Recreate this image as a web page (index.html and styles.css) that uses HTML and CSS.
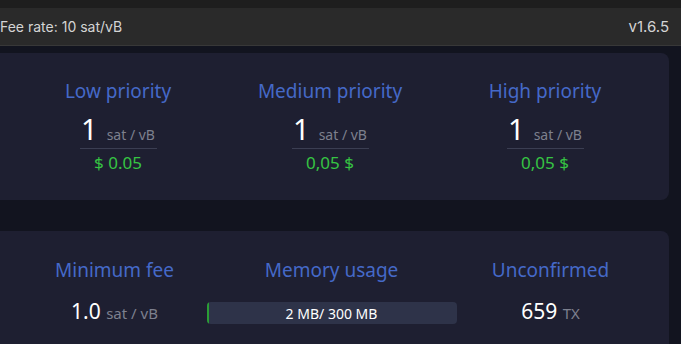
FILE: index.html
```html
<!DOCTYPE html>
<html lang="en">
<head>
    <meta charset="UTF-8">
    <title>Fees</title>
    <link rel="stylesheet" href="styles.css">
</head>
<body>
    <div class="top-strip"></div>
    <div class="top-bar">
        <span>Fee rate: 10 sat/vB</span>
        <span class="version">v1.6.5</span>
    </div>

    <div class="card fees">
        <div class="col">
            <h2>Low priority</h2>
            <div class="rate"><span class="num">1</span><span class="unit">sat / vB</span></div>
            <div class="fiat">$ 0.05</div>
        </div>
        <div class="col">
            <h2>Medium priority</h2>
            <div class="rate"><span class="num">1</span><span class="unit">sat / vB</span></div>
            <div class="fiat">0,05 $</div>
        </div>
        <div class="col">
            <h2>High priority</h2>
            <div class="rate"><span class="num">1</span><span class="unit">sat / vB</span></div>
            <div class="fiat">0,05 $</div>
        </div>
    </div>

    <div class="card stats">
        <div class="col">
            <h2>Minimum fee</h2>
            <div class="value">1.0 <span class="unit">sat / vB</span></div>
        </div>
        <div class="col">
            <h2>Memory usage</h2>
            <div class="progress">
                <div class="progress-fill" style="width: 0.7%"></div>
                <span class="progress-label">2 MB/ 300 MB</span>
            </div>
        </div>
        <div class="col">
            <h2>Unconfirmed</h2>
            <div class="value">659 <span class="unit">TX</span></div>
        </div>
    </div>
</body>
</html>
```

FILE: styles.css
```css
body {
    margin: 0;
    background: #12141f;
    font-family: 'Noto Sans', 'Open Sans', sans-serif;
    overflow: hidden;
    height: 344px;
}

.top-strip {
    height: 8px;
    background: #1e1e1e;
}

.top-bar {
    height: 37px;
    background: #2a2a2a;
    border-bottom: 1px solid #383838;
    display: flex;
    justify-content: space-between;
    align-items: center;
    padding: 0 12px 0 0;
    font-family: 'Inter', 'Noto Sans', sans-serif;
    font-size: 14px;
    color: #d4d4d4;
}

.version {
    font-size: 15px;
}

.card {
    background: #1e1f31;
    border-radius: 8px;
    margin-left: -9px;
    width: 678px;
    box-sizing: border-box;
    display: grid;
}

.fees {
    margin-top: 7px;
    height: 147px;
    padding: 25px 0 0 21px;
    grid-template-columns: 212px 212px 218px;
}

.stats {
    margin-top: 31px;
    height: 130px;
    padding: 26px 0 0 15px;
    grid-template-columns: 217px 217px 221px;
}

.col {
    display: flex;
    flex-direction: column;
    align-items: center;
}

h2 {
    margin: 0;
    font-size: 19px;
    font-weight: 400;
    color: #4569c8;
    line-height: 26px;
}

.rate {
    margin-top: 9px;
    width: 77px;
    padding-bottom: 3px;
    border-bottom: 1px solid #3b3e52;
    display: flex;
    justify-content: center;
    align-items: baseline;
    gap: 9px;
}

.num {
    font-size: 29px;
    line-height: 32px;
    color: #fff;
}

.unit {
    font-size: 14px;
    color: #7d808e;
}

.fiat {
    margin-top: 2px;
    font-size: 17px;
    color: #36c443;
}

.value {
    margin-top: 14px;
    font-size: 21px;
    color: #fff;
}

.value .unit {
    font-size: 15px;
}

.progress {
    margin-top: 19px;
    position: relative;
    width: 250px;
    height: 22px;
    background: #2e3349;
    border-radius: 4px;
    overflow: hidden;
    display: flex;
    align-items: center;
    justify-content: center;
}

.progress-fill {
    position: absolute;
    left: 0;
    top: 0;
    bottom: 0;
    min-width: 2px;
    background: #2a9d35;
}

.progress-label {
    position: relative;
    font-size: 14px;
    color: #fff;
}
```
